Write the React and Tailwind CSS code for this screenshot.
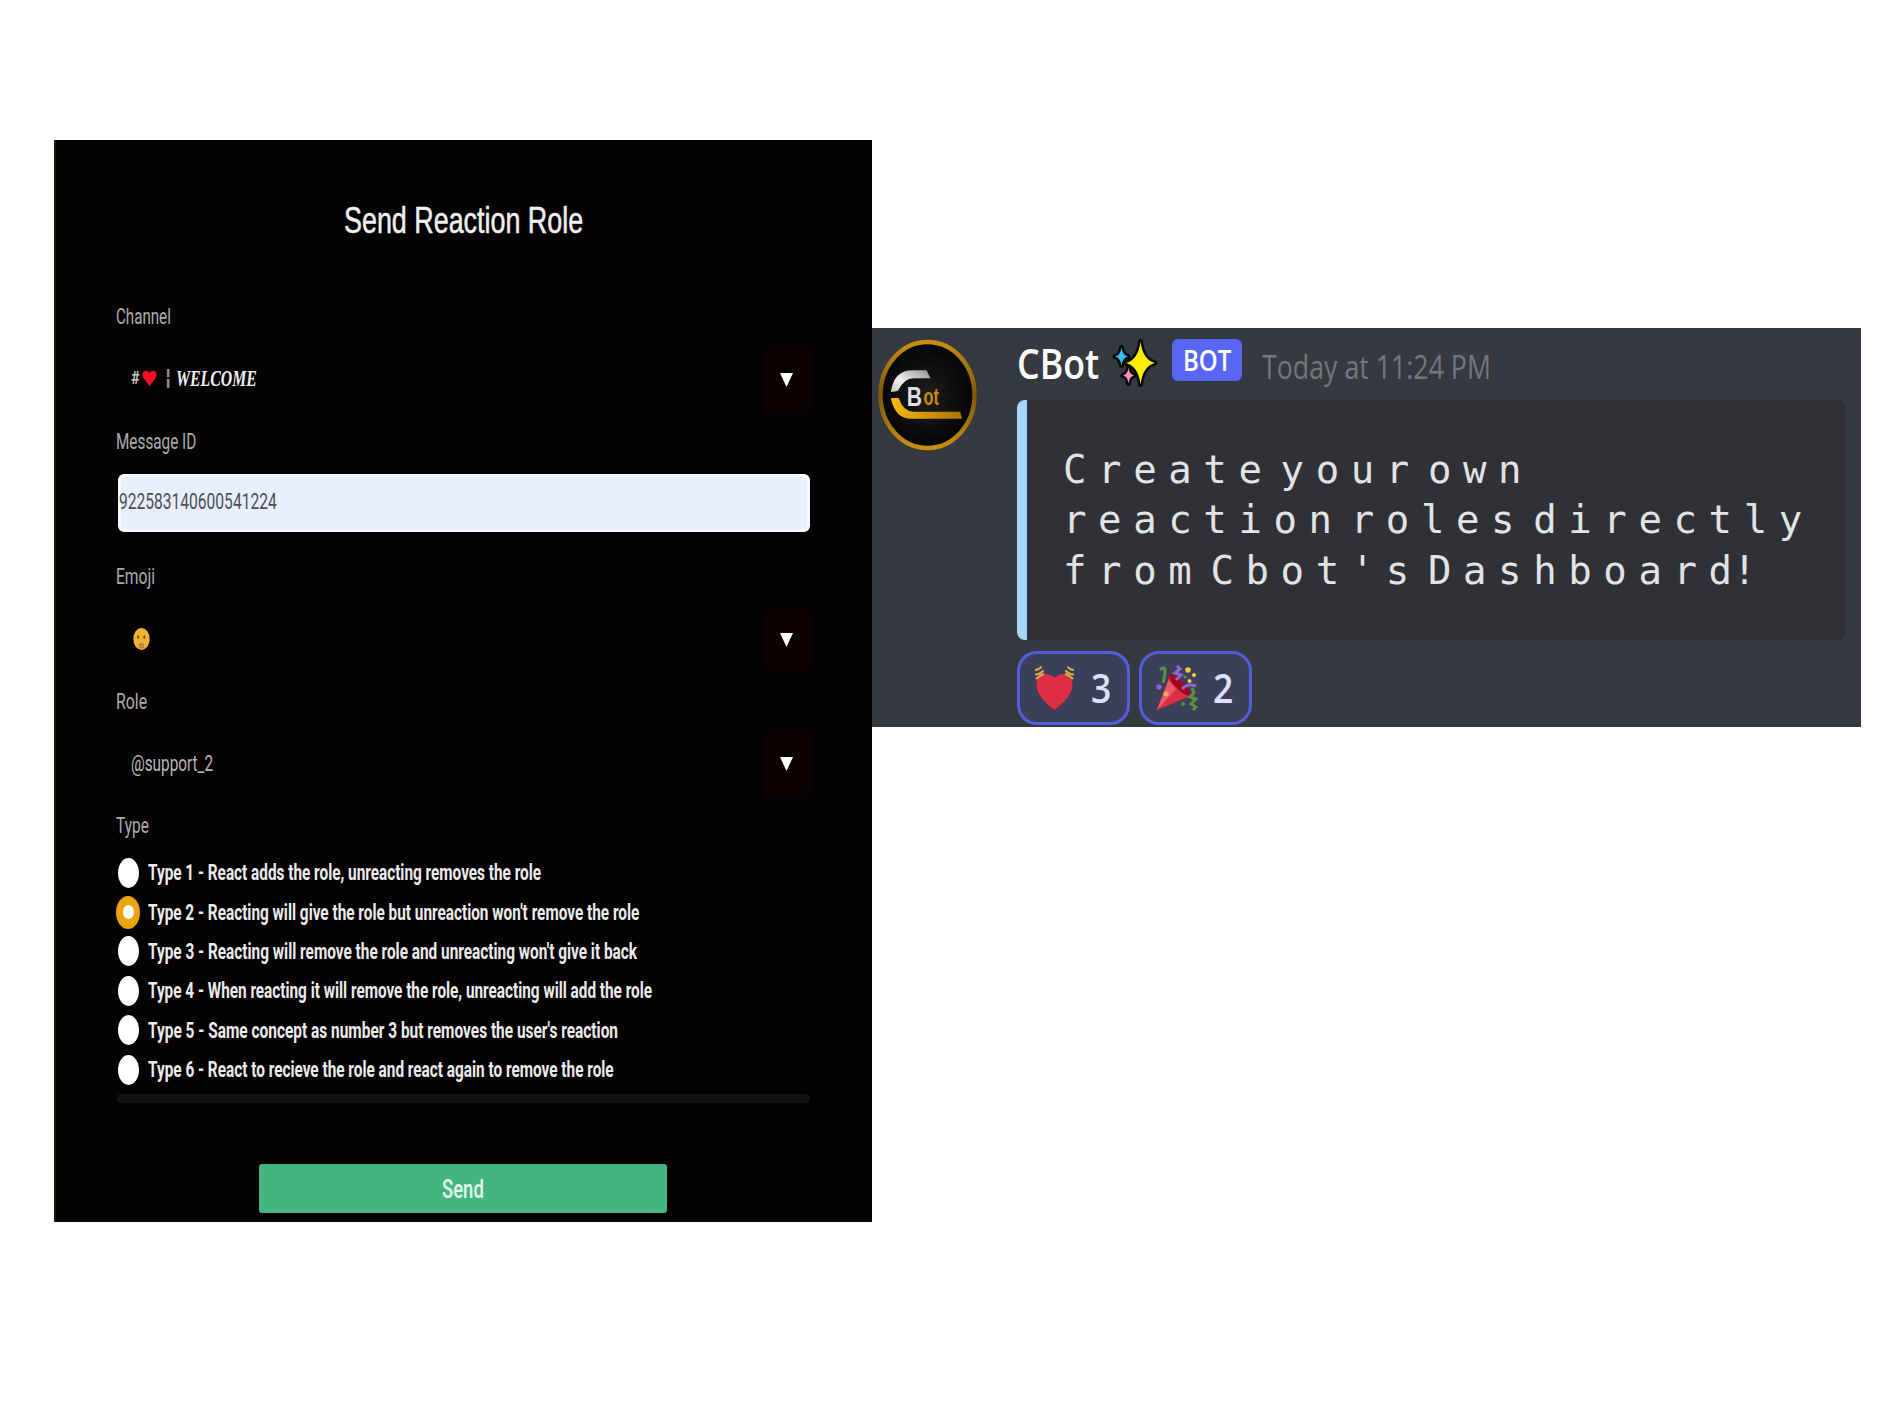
import React, { useLayoutEffect, useRef } from "react";

/* Condenses or widens its text to fill the width of its box. */
function Fit({ className = "", children }) {
  const box = useRef(null);
  const text = useRef(null);
  useLayoutEffect(() => {
    const scale = box.current.clientWidth / text.current.offsetWidth;
    text.current.style.transform = `scaleX(${scale})`;
  }, [children]);
  return (
    <div ref={box} className={`shrink-0 whitespace-nowrap ${className}`}>
      <span ref={text} className="inline-block origin-left">
        {children}
      </span>
    </div>
  );
}

function Label({ className, children }) {
  return (
    <Fit className={`h-7 text-[22px] leading-[29px] text-[#adadad] ${className}`}>{children}</Fit>
  );
}

function Select({ className, children }) {
  return (
    <div className={`-mr-px flex h-[62px] items-center justify-between pl-[15px] ${className}`}>
      {children}
      <div className="flex h-[62px] w-[46px] items-center justify-center rounded-sm bg-[#0e0201] pr-[4px] pb-px">
        <svg className="h-[14px] w-[13px]" viewBox="0 0 13 14">
          <path d="M0 0H13L6.5 14Z" fill="#fff" />
        </svg>
      </div>
    </div>
  );
}

const types = [
  ["Type 1 - React adds the role, unreacting removes the role", "w-[393px]"],
  ["Type 2 - Reacting will give the role but unreaction won't remove the role", "w-[491px]"],
  ["Type 3 - Reacting will remove the role and unreacting won't give it back", "w-[489px]"],
  ["Type 4 - When reacting it will remove the role, unreacting will add the role", "w-[504px]"],
  ["Type 5 - Same concept as number 3 but removes the user's reaction", "w-[470px]"],
  ["Type 6 - React to recieve the role and react again to remove the role", "w-[466px]"],
];

function FormPanel() {
  return (
    <section className="h-[1082px] w-[818px] border-l-2 border-[#1f1804] bg-[#040203] pr-[62px] pl-[60px] pt-[57px] font-['Roboto',sans-serif]">
      <Fit className="ml-[228px] h-12 w-[239px] font-['Liberation_Sans',sans-serif] text-[36px] leading-[47px] text-[#f0f0f0] [-webkit-text-stroke:0.5px_#f0f0f0]">
        Send Reaction Role
      </Fit>
      <Label className="mt-[57px] w-[55px]">Channel</Label>
      <Select className="mt-[19px]">
        <div className="flex items-center pb-[5px]">
          <Fit className="w-[9px] text-[18px] font-bold text-[#c9c9bd]">#</Fit>
          <svg className="ml-[2px] h-[16px] w-[15px]" viewBox="0 0 15 17">
            <path d="M7.5 17L.8 8.2C-.8 4.500 .4 .8 3.500 .8C5.500 .8 7 2 7.500 3.500C8 2 9.500 .8 11.500 .8C14.600 .8 15.800 4.500 14.200 8.200Z" fill="#fb0d23" />
          </svg>
          <Fit className="ml-2 w-[6px] text-[22px] text-[#9a8f8c]">¦</Fit>
          <Fit className="ml-[5px] w-[81px] font-['Liberation_Serif',serif] text-[24px] leading-[30px] font-bold text-[#f2f0ee] italic">
            WELCOME
          </Fit>
        </div>
      </Select>
      <Label className="mt-4 w-[80px]">Message ID</Label>
      <div className="mt-[19px] ml-[2px] h-[58px] rounded-md border-[3px] border-[#f4f8ff] bg-[#e8eefd]">
        <Fit className="-ml-[2px] h-[52px] w-[158px] text-[22px] leading-[49px] text-[#4c4e54]">922583140600541224</Fit>
      </div>
      <Label className="mt-[30px] w-[39px]">Emoji</Label>
      <Select className="mt-[19px]">
        <svg className="mb-[3px] ml-[2px] h-6 w-[17px]" viewBox="0 0 18 24">
          <ellipse cx="9" cy="12" rx="8.700" ry="11.600" fill="#f0b432" />
          <ellipse cx="5.500" cy="10" rx="1.100" ry="2" fill="#6d4a16" />
          <ellipse cx="12" cy="10" rx="1.100" ry="2" fill="#6d4a16" />
          <path d="M5.500 18Q9 13.500 12.500 18L11 20H7Z" fill="#a8895f" />
          <path d="M6 19.500Q9 21.500 12 19.500L11 22H7Z" fill="#d2691e" />
        </svg>
      </Select>
      <Label className="mt-4 w-[31px]">Role</Label>
      <Select className="mt-[18px]">
        <Fit className="w-[82px] text-[22px] leading-[30px] text-[#b8b8b8]">@support_2</Fit>
      </Select>
      <Label className="mt-4 w-[33px]">Type</Label>
      <div className="mt-[14px]">
        {types.map(([text, width], i) => (
          <div key={text} className="flex h-[39.4px] items-center">
            {i === 1 ? (
              <span className="flex h-[33px] w-[24px] items-center justify-center rounded-[50%] bg-[#eba30c]">
                <span className="h-[14px] w-[11px] rounded-[50%] bg-white" />
              </span>
            ) : (
              <span className="mr-px ml-[2px] h-[30px] w-[21px] rounded-[50%] bg-white" />
            )}
            <Fit className={`ml-[8px] text-[22px] leading-[39px] font-bold text-[#ececec] ${width}`}>{text}</Fit>
          </div>
        ))}
      </div>
      <div className="mt-[5px] ml-px h-[9px] rounded-sm bg-[#121212]" />
      <div className="mt-[61px] ml-[143px] flex h-[49px] w-[408px] justify-center rounded-[3px] bg-[#43b581]">
        <Fit className="w-[42px] text-[26px] leading-[50px] font-medium text-[#e4f8ee]">Send</Fit>
      </div>
    </section>
  );
}

function Avatar() {
  return (
    <svg className="mt-px h-[112px] w-[99px] shrink-0" viewBox="0 0 100 112">
      <defs>
        <radialGradient id="disc">
          <stop offset="0" stopColor="#1c1c1c" />
          <stop offset="1" stopColor="#050506" />
        </radialGradient>
        <linearGradient id="silver" x1="0" y1="1" x2="1" y2="0">
          <stop offset="0" stopColor="#c4c4c4" />
          <stop offset=".4" stopColor="#f0f0f0" />
          <stop offset="1" stopColor="#909090" />
        </linearGradient>
        <linearGradient id="gold" x1="0" y1="0" x2="1" y2="0">
          <stop offset="0" stopColor="#f9b80c" />
          <stop offset="1" stopColor="#a87400" />
        </linearGradient>
        <linearGradient id="rim" x1="0" y1="0" x2="0" y2="1">
          <stop offset="0" stopColor="#c78f0c" />
          <stop offset=".5" stopColor="#7c5808" />
          <stop offset="1" stopColor="#c78f0c" />
        </linearGradient>
      </defs>
      <ellipse cx="50" cy="56" rx="47.500" ry="53.500" fill="url(#disc)" stroke="url(#rim)" strokeWidth="4.500" />
      <path d="M13 53Q16 31 35 31H49L53 39H36Q26 39 20 52Z" fill="url(#silver)" />
      <path d="M13 59H21Q25 72 36 73H83L85 80H34Q17 80 13 59Z" fill="url(#gold)" />
      <text transform="translate(29 67) scale(.76 1)" fill="#dedee4" fontSize="28" className="font-['Liberation_Sans',sans-serif] font-bold">B</text>
      <text transform="translate(46 66) scale(.66 1)" fill="#c98c05" fontSize="25" className="font-['Liberation_Sans',sans-serif] font-bold">ot</text>
    </svg>
  );
}

function Sparkles() {
  const star = (x, y, rx, ry) =>
    `M${x} ${y - ry}Q${x + rx * 0.15} ${y - ry * 0.15} ${x + rx} ${y}Q${x + rx * 0.15} ${y + ry * 0.15} ${x} ${y + ry}Q${x - rx * 0.15} ${y + ry * 0.15} ${x - rx} ${y}Q${x - rx * 0.15} ${y - ry * 0.15} ${x} ${y - ry}Z`;
  return (
    <svg className="mt-px ml-[13px] h-12 w-[45px] shrink-0" viewBox="0 0 45 48" strokeLinejoin="round" strokeWidth="5" stroke="#080808" paintOrder="stroke">
      <path d={star(9.5, 17.5, 6.5, 9)} fill="#30c0f0" />
      <path d={star(16.5, 36.5, 5.5, 8)} fill="#f58fb5" />
      <path d={star(28.5, 24, 14.5, 21.5)} fill="#fff000" />
    </svg>
  );
}

function HeartIcon() {
  return (
    <svg className="h-[46px] w-[42px]" viewBox="0 0 42 46">
      <path d="M20.500 45C15 40.500 2.500 31 2.500 19.500C2.500 13 6.500 9 11.500 9C16 9 19.500 11.500 20.500 13.500C21.500 11.500 25 9 29.500 9C34.500 9 38.500 13 38.500 19.500C38.500 31 26 40.500 20.500 45Z" fill="#df2e44" />
      <g fill="none" stroke="#d9aa49" strokeWidth="2">
        <path d="M1 5Q5 5 7.500 1.500M1 9.500Q6 9.500 9.500 5.500M2 14Q5 10.500 10 9" />
        <path d="M40 5Q36 5 33.500 1.500M40 9.500Q35 9.500 31.500 5.500M39 14Q36 10.500 31 9" />
      </g>
    </svg>
  );
}

function PartyIcon() {
  return (
    <svg className="h-[46px] w-[42px]" viewBox="0 0 42 46">
      <path d="M14 10L34 31L1 45Z" fill="#dd2e44" />
      <path d="M12.500 15L1 45L20 24Z" fill="#ea596e" />
      <path d="M14 9C20 10 33 21 34 28C34 33 28 30 22 24C15 18 12 12 14 9Z" fill="#a0041e" />
      <path d="M4 5Q9 0 9 6Q9 10 7 18" fill="none" stroke="#5c913b" strokeWidth="3" />
      <path d="M36 23L38 28L34 32L40 34L35 39L40 42L37 45" fill="none" stroke="#5c913b" strokeWidth="3" />
      <path d="M21 1L24 4L19 8L25 10L20 15M26 24Q31 18 40 21" fill="none" stroke="#9266cc" strokeWidth="3" />
      <circle cx="3" cy="22" r="2.700" fill="#9266cc" />
      <circle cx="32" cy="5" r="2.700" fill="#ffcc4d" />
      <circle cx="38" cy="10" r="2" fill="#ffcc4d" />
      <circle cx="33.500" cy="16" r="2" fill="#ffcc4d" />
      <circle cx="10" cy="29" r="2.500" fill="#f4b13d" />
      <circle cx="27" cy="39" r="2" fill="#5c913b" />
      <circle cx="29" cy="12" r="1.800" fill="#5c913b" />
    </svg>
  );
}

function Reaction({ icon, count }) {
  return (
    <div className="flex h-[74px] w-[113px] items-center rounded-[20px] border-[3px] border-[#525edb] bg-[#3b3f59] pl-[14px] text-[#dee0fc]">
      {icon}
      <Fit className="ml-[15px] w-5 font-['Open_Sans',sans-serif] text-[39px] leading-[68px] font-semibold">{count}</Fit>
    </div>
  );
}

function MessagePanel() {
  return (
    <section className="mt-[188px] flex h-[399px] w-[989px] bg-[#36393f] pt-[10px] pl-[6px] font-['Open_Sans',sans-serif]">
      <Avatar />
      <div className="ml-[40px] w-[829px]">
        <div className="flex h-[50px] items-start">
          <Fit className="w-[82px] text-[41px] leading-[50px] font-semibold text-white">CBot</Fit>
          <Sparkles />
          <div className="mt-px ml-[15px] flex h-[42px] w-[70px] shrink-0 justify-center rounded-md bg-[#5865f2]">
            <Fit className="w-[48px] text-[28px] leading-[42px] font-semibold text-white">BOT</Fit>
          </div>
          <Fit className="ml-5 w-[229px] text-[32px] leading-[57px] text-[#72767d]">Today at 11:24 PM</Fit>
        </div>
        <div className="mt-3 h-[240px] rounded-lg border-l-[10px] border-[#a6d7ff] bg-[#2f3136] pt-[45px] pl-[36px] font-['DejaVu_Sans_Mono',monospace] text-[39px] leading-[50.3px] tracking-[11.6px] whitespace-nowrap text-[#e2e3e4] [word-spacing:-28px]">
          <p>Create your own</p>
          <p>reaction roles directly</p>
          <p>
            from Cbot's Dashboar<span className="tracking-[0.6px]">d!</span>
          </p>
        </div>
        <div className="mt-[11px] flex gap-[9px]">
          <Reaction icon={<HeartIcon />} count="3" />
          <Reaction icon={<PartyIcon />} count="2" />
        </div>
      </div>
    </section>
  );
}

export default function App() {
  return (
    <main className="flex h-[1417px] w-[1890px] items-start overflow-hidden bg-white pt-[140px] pl-[54px]">
      <FormPanel />
      <MessagePanel />
    </main>
  );
}
